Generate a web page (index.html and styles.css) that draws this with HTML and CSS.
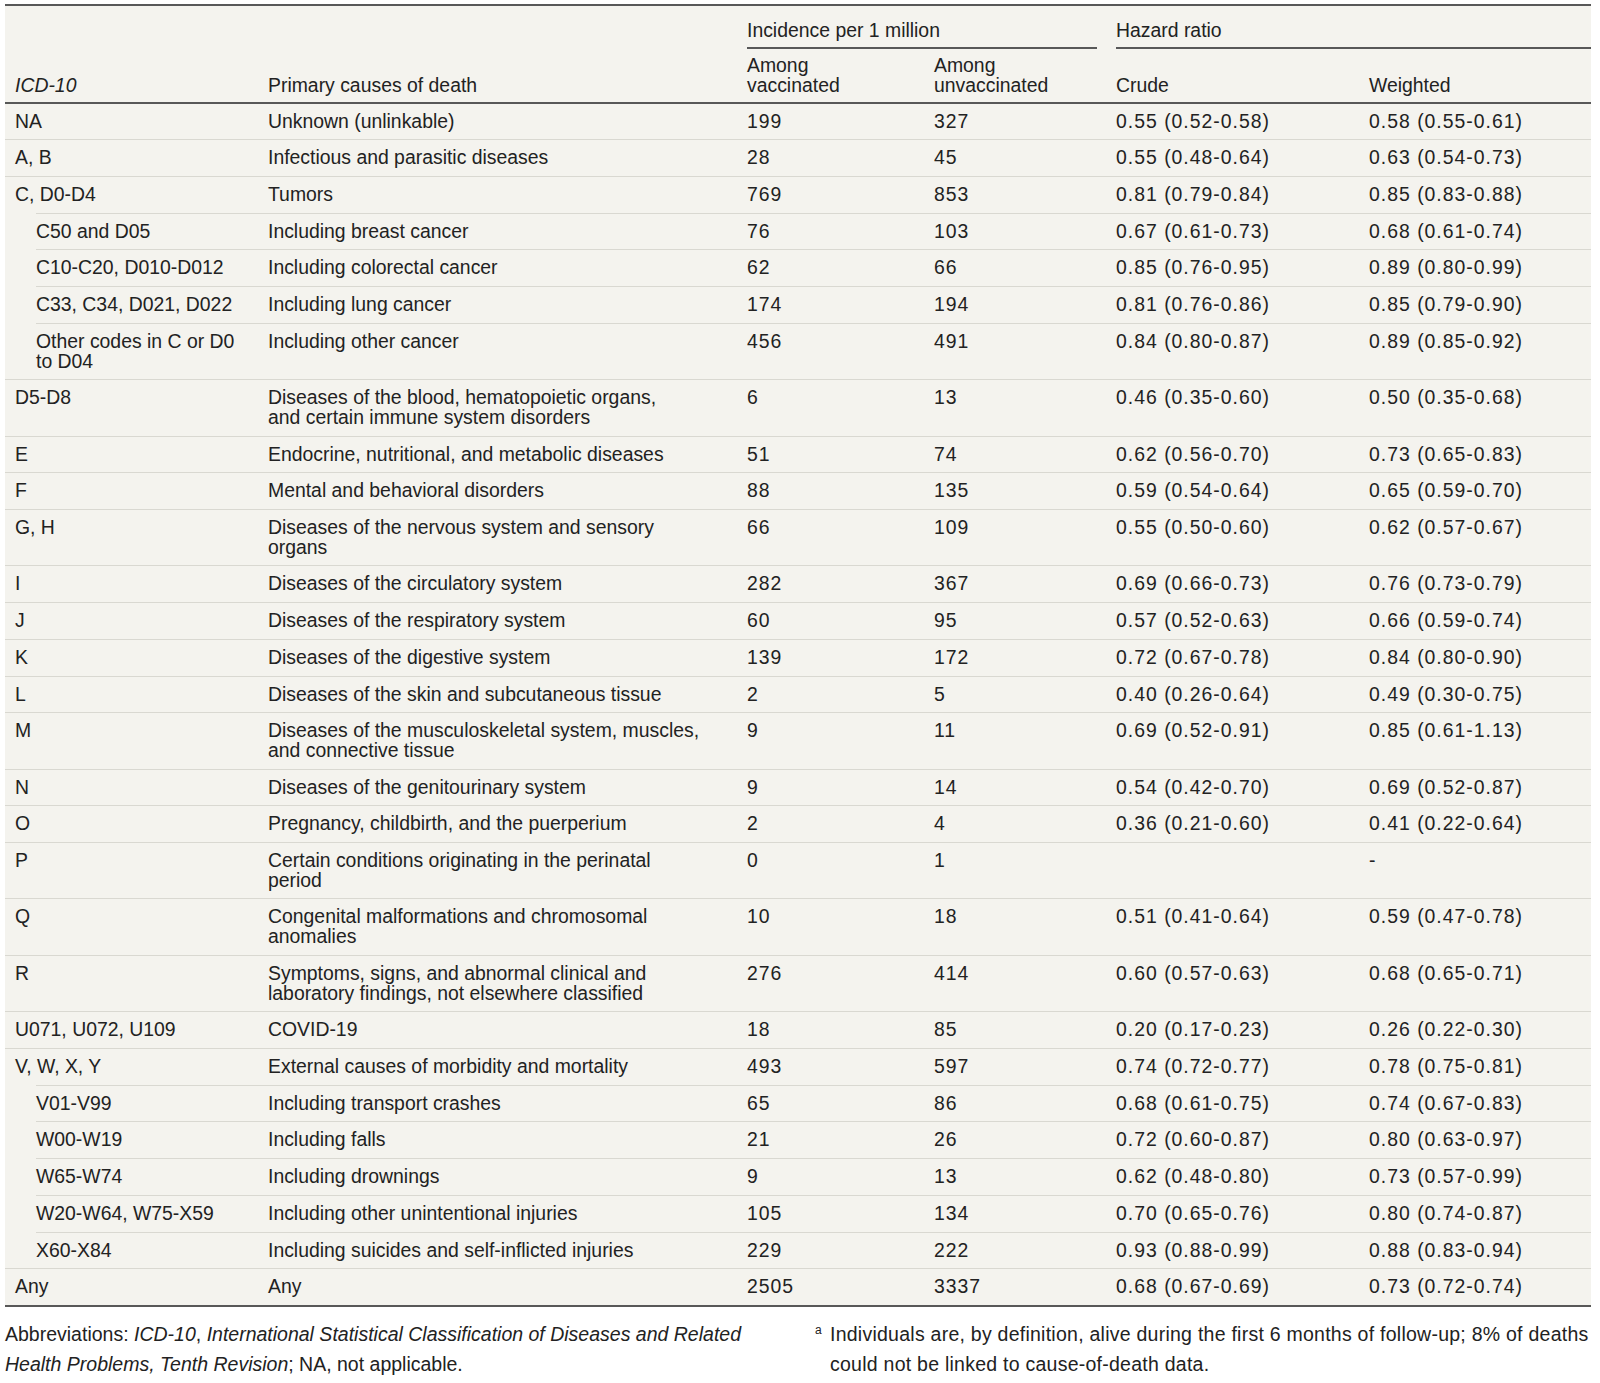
FILE: index.html
```html
<!DOCTYPE html>
<html lang="en">
<head>
<meta charset="utf-8">
<title>Primary causes of death by vaccination status</title>
<link rel="stylesheet" href="styles.css">
</head>
<body>
<div class="page">
  <table class="causes">
    <colgroup>
      <col class="c-code"><col class="c-cause"><col class="c-vac"><col class="c-unvac"><col class="c-crude"><col class="c-weighted">
    </colgroup>
    <thead>
      <tr>
        <th rowspan="2" class="lbl"><em>ICD-10</em></th>
        <th rowspan="2" class="lbl">Primary causes of death</th>
        <th colspan="2" class="group group-inc"><span>Incidence per 1 million</span></th>
        <th colspan="2" class="group group-hr"><span>Hazard ratio</span></th>
      </tr>
      <tr>
        <th class="sub">Among<br>vaccinated</th>
        <th class="sub">Among<br>unvaccinated</th>
        <th class="sub">Crude</th>
        <th class="sub">Weighted</th>
      </tr>
    </thead>
    <tbody>
      <tr><td>NA</td><td>Unknown (unlinkable)</td><td>199</td><td>327</td><td>0.55 (0.52-0.58)</td><td>0.58 (0.55-0.61)</td></tr>
      <tr><td>A, B</td><td>Infectious and parasitic diseases</td><td>28</td><td>45</td><td>0.55 (0.48-0.64)</td><td>0.63 (0.54-0.73)</td></tr>
      <tr><td>C, D0-D4</td><td>Tumors</td><td>769</td><td>853</td><td>0.81 (0.79-0.84)</td><td>0.85 (0.83-0.88)</td></tr>
      <tr class="child"><td>C50 and D05</td><td>Including breast cancer</td><td>76</td><td>103</td><td>0.67 (0.61-0.73)</td><td>0.68 (0.61-0.74)</td></tr>
      <tr class="child"><td>C10-C20, D010-D012</td><td>Including colorectal cancer</td><td>62</td><td>66</td><td>0.85 (0.76-0.95)</td><td>0.89 (0.80-0.99)</td></tr>
      <tr class="child"><td>C33, C34, D021, D022</td><td>Including lung cancer</td><td>174</td><td>194</td><td>0.81 (0.76-0.86)</td><td>0.85 (0.79-0.90)</td></tr>
      <tr class="child"><td>Other codes in C or D0<br>to D04</td><td>Including other cancer</td><td>456</td><td>491</td><td>0.84 (0.80-0.87)</td><td>0.89 (0.85-0.92)</td></tr>
      <tr><td>D5-D8</td><td>Diseases of the blood, hematopoietic organs,<br>and certain immune system disorders</td><td>6</td><td>13</td><td>0.46 (0.35-0.60)</td><td>0.50 (0.35-0.68)</td></tr>
      <tr><td>E</td><td>Endocrine, nutritional, and metabolic diseases</td><td>51</td><td>74</td><td>0.62 (0.56-0.70)</td><td>0.73 (0.65-0.83)</td></tr>
      <tr><td>F</td><td>Mental and behavioral disorders</td><td>88</td><td>135</td><td>0.59 (0.54-0.64)</td><td>0.65 (0.59-0.70)</td></tr>
      <tr><td>G, H</td><td>Diseases of the nervous system and sensory<br>organs</td><td>66</td><td>109</td><td>0.55 (0.50-0.60)</td><td>0.62 (0.57-0.67)</td></tr>
      <tr><td>I</td><td>Diseases of the circulatory system</td><td>282</td><td>367</td><td>0.69 (0.66-0.73)</td><td>0.76 (0.73-0.79)</td></tr>
      <tr><td>J</td><td>Diseases of the respiratory system</td><td>60</td><td>95</td><td>0.57 (0.52-0.63)</td><td>0.66 (0.59-0.74)</td></tr>
      <tr><td>K</td><td>Diseases of the digestive system</td><td>139</td><td>172</td><td>0.72 (0.67-0.78)</td><td>0.84 (0.80-0.90)</td></tr>
      <tr><td>L</td><td>Diseases of the skin and subcutaneous tissue</td><td>2</td><td>5</td><td>0.40 (0.26-0.64)</td><td>0.49 (0.30-0.75)</td></tr>
      <tr><td>M</td><td>Diseases of the musculoskeletal system, muscles,<br>and connective tissue</td><td>9</td><td>11</td><td>0.69 (0.52-0.91)</td><td>0.85 (0.61-1.13)</td></tr>
      <tr><td>N</td><td>Diseases of the genitourinary system</td><td>9</td><td>14</td><td>0.54 (0.42-0.70)</td><td>0.69 (0.52-0.87)</td></tr>
      <tr><td>O</td><td>Pregnancy, childbirth, and the puerperium</td><td>2</td><td>4</td><td>0.36 (0.21-0.60)</td><td>0.41 (0.22-0.64)</td></tr>
      <tr><td>P</td><td>Certain conditions originating in the perinatal<br>period</td><td>0</td><td>1</td><td></td><td>-</td></tr>
      <tr><td>Q</td><td>Congenital malformations and chromosomal<br>anomalies</td><td>10</td><td>18</td><td>0.51 (0.41-0.64)</td><td>0.59 (0.47-0.78)</td></tr>
      <tr><td>R</td><td>Symptoms, signs, and abnormal clinical and<br>laboratory findings, not elsewhere classified</td><td>276</td><td>414</td><td>0.60 (0.57-0.63)</td><td>0.68 (0.65-0.71)</td></tr>
      <tr><td>U071, U072, U109</td><td>COVID-19</td><td>18</td><td>85</td><td>0.20 (0.17-0.23)</td><td>0.26 (0.22-0.30)</td></tr>
      <tr><td>V, W, X, Y</td><td>External causes of morbidity and mortality</td><td>493</td><td>597</td><td>0.74 (0.72-0.77)</td><td>0.78 (0.75-0.81)</td></tr>
      <tr class="child"><td>V01-V99</td><td>Including transport crashes</td><td>65</td><td>86</td><td>0.68 (0.61-0.75)</td><td>0.74 (0.67-0.83)</td></tr>
      <tr class="child"><td>W00-W19</td><td>Including falls</td><td>21</td><td>26</td><td>0.72 (0.60-0.87)</td><td>0.80 (0.63-0.97)</td></tr>
      <tr class="child"><td>W65-W74</td><td>Including drownings</td><td>9</td><td>13</td><td>0.62 (0.48-0.80)</td><td>0.73 (0.57-0.99)</td></tr>
      <tr class="child"><td>W20-W64, W75-X59</td><td>Including other unintentional injuries</td><td>105</td><td>134</td><td>0.70 (0.65-0.76)</td><td>0.80 (0.74-0.87)</td></tr>
      <tr class="child"><td>X60-X84</td><td>Including suicides and self-inflicted injuries</td><td>229</td><td>222</td><td>0.93 (0.88-0.99)</td><td>0.88 (0.83-0.94)</td></tr>
      <tr><td>Any</td><td>Any</td><td>2505</td><td>3337</td><td>0.68 (0.67-0.69)</td><td>0.73 (0.72-0.74)</td></tr>
    </tbody>
  </table>
  <div class="notes">
    <p class="abbr">Abbreviations: <em>ICD-10</em>, <em>International Statistical Classification of Diseases and Related<br>Health Problems, Tenth Revision</em>; NA, not applicable.</p>
    <p class="fn"><sup class="mark">a</sup>Individuals are, by definition, alive during the first 6 months of follow-up; 8% of deaths<br>could not be linked to cause-of-death data.</p>
  </div>
</div>
</body>
</html>
```

FILE: styles.css
```css
html, body {
  margin: 0;
  padding: 0;
  background: #ffffff;
}

.page {
  padding: 4px 9px 0 5px;
  font-family: "Liberation Sans", Arial, sans-serif;
  color: #222222;
}

.causes {
  width: 1586px;
  table-layout: fixed;
  border-collapse: separate;
  border-spacing: 0;
  background: #f4f3ee;
  border-top: 2px solid #585858;
  border-bottom: 2px solid #585858;
  font-size: 19.4px;
  line-height: 19.7px;
}

.c-code { width: 253px; }
.c-cause { width: 479px; }
.c-vac { width: 187px; }
.c-unvac { width: 182px; }
.c-crude { width: 253px; }
.c-weighted { width: 232px; }

.causes th {
  font-weight: normal;
  text-align: left;
  vertical-align: bottom;
}

.causes th.group {
  padding: 15px 9px 0 10px;
}

.causes th.group span {
  display: block;
  padding-bottom: 6px;
  border-bottom: 2px solid #585858;
}

.causes th.group-hr {
  padding-right: 0;
}

.causes th.sub {
  padding: 7.5px 10px 6px;
  border-bottom: 2px solid #585858;
}

.causes th.lbl {
  padding: 0 10px 6px;
  border-bottom: 2px solid #585858;
}

.causes td {
  padding: 8px 10px;
  vertical-align: top;
  border-top: 1px solid #d9d8d1;
}

.causes tbody tr:first-child td {
  border-top: 0;
}

.causes tr.child td:first-child {
  padding-left: 31px;
  border-top-color: transparent;
  background: linear-gradient(#d9d8d1, #d9d8d1) no-repeat right top / calc(100% - 31px) 1px;
  background-origin: border-box;
}

.causes td:nth-child(n+3) {
  letter-spacing: 1px;
}

.notes {
  display: grid;
  grid-template-columns: 776px 776px;
  column-gap: 34px;
  margin-top: 12px;
  font-size: 19.5px;
  line-height: 30px;
}

.notes p {
  margin: 0;
}

.fn {
  padding-left: 15px;
  text-indent: -15px;
  letter-spacing: 0.25px;
}

.fn .mark {
  display: inline-block;
  width: 15px;
  text-indent: 0;
  font-size: 12px;
  line-height: 0;
  vertical-align: 7px;
}
```
